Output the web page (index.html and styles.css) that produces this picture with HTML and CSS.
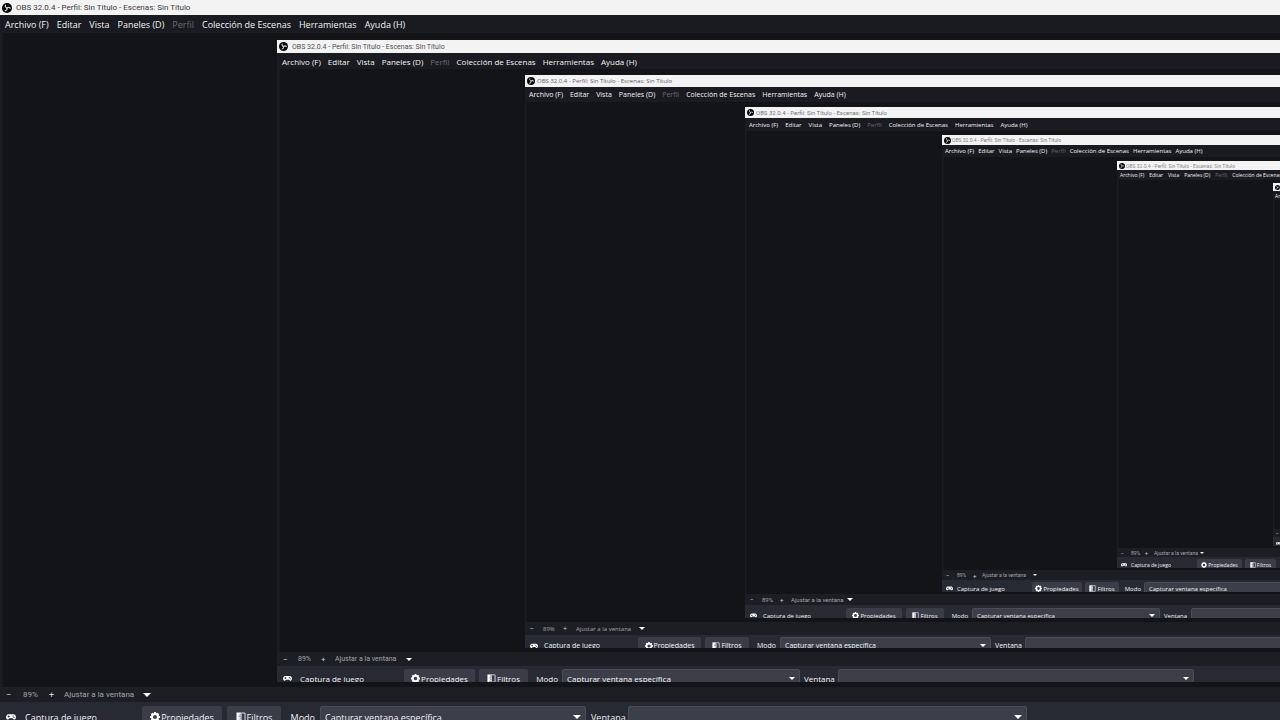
FILE: index.html
```html
<!DOCTYPE html>
<html lang="es">

<head>
    <meta charset="UTF-8">
    <meta name="viewport" content="width=device-width, initial-scale=1.0">
    <title>OBS 32.0.4 - Perfil: Sin Título - Escenas: Sin Título</title>
    <link rel="stylesheet" href="styles.css">
</head>

<body>

    <!-- Shared icons -->
    <svg class="icon-defs" aria-hidden="true">
        <symbol id="icon-obs" viewBox="0 0 20 20">
            <circle cx="10" cy="10" r="10" fill="#08090b"/>
            <g fill="none" stroke="#d4d4d8" stroke-width="2.4" stroke-linecap="round">
                <path d="M7 4.400c-1 3 .6 4.900 3 5.400"/>
                <path d="M7 4.400c-1 3 .6 4.900 3 5.400" transform="rotate(120 10 10)"/>
                <path d="M7 4.400c-1 3 .6 4.900 3 5.400" transform="rotate(240 10 10)"/>
            </g>
        </symbol>
        <symbol id="icon-gamepad" viewBox="0 0 22 14">
            <path fill="#fff" fill-rule="evenodd" d="M6 1h10a6 6 0 0 1 5.500 8c-.6 3.600-3.500 4.800-5.500 2.500L14.500 10h-7L6 11.500C4 13.800 1.100 12.600.5 9A6 6 0 0 1 6 1zM5.200 3.500v1.700H3.500v1.600h1.700v1.700h1.600V6.800h1.700V5.200H6.800V3.500zM15.500 3.500a1.300 1.300 0 1 0 .01 0zM17.500 6.500a1.300 1.300 0 1 0 .01 0z"/>
        </symbol>
        <symbol id="icon-gear" viewBox="0 0 20 20">
            <circle cx="10" cy="10" r="6" fill="none" stroke="#fff" stroke-width="4"/>
            <path stroke="#fff" stroke-width="4" d="M10 0v4M10 16v4M0 10h4M16 10h4M3 3l3 3M14 14l3 3M3 17l3-3M14 6l3-3"/>
        </symbol>
        <symbol id="icon-filter" viewBox="0 0 20 20">
            <path fill="#fff" d="M1 1h10v18H1z"/>
            <path fill="#9b9ca6" d="M7 3h4v3H7zM5 7h6v3H5zM7 11h4v3H7zM5 15h6v3H5z"/>
            <path fill="none" stroke="#d8d9de" stroke-width="2" d="M11 2h7v16h-7"/>
        </symbol>
    </svg>

    <main id="screen"></main>

    <script src="script.js"></script>

</body>

</html>
```
FILE: styles.css
```css
/* Basic reset */
* {
    box-sizing: border-box;
    margin: 0;
    padding: 0;
}

body {
    height: 100vh;
    background: #131418;
    color: #f2f2f4;
    overflow: hidden;
}

#screen {
    display: grid;
    height: 100%;
}

.icon-defs {
    position: absolute;
    width: 0;
    height: 0;
}

/* Sizes of every capture level, from the outer window to the deepest one */
.level-0 {
    --font: 9px; --small-font: 8px; --icon: 10px;
    --title-h: 15px; --menu-h: 18px; --status-h: 15px; --tools-h: 18px;
    --title-gap: 4px; --name-gap: 9px; --title-color: #3c3c40;
    --menu-gap: 8px; --edge: 5px; --gap: 5px; --button-top: 4px; --button-h: 22px;
    --indent: 274px; --pad-top: 7px; --pad-bottom: 5px;
    --status-cols: 17px 26px 15px 87px;
    --tool-cols: 131px 80px 54px 29px 266px 32px 399px;
}

.level-1 {
    --font: 8px; --small-font: 7px; --icon: 9px;
    --title-h: 13px; --menu-h: 16px; --status-h: 14px; --tools-h: 16px;
    --title-gap: 4px; --name-gap: 8px; --title-color: #505055;
    --menu-gap: 7px; --edge: 5px; --gap: 4px; --button-top: 3px; --button-h: 19px;
    --indent: 245px; --pad-top: 6px; --pad-bottom: 4px;
    --status-cols: 15px 23px 14px 77px;
    --tool-cols: 117px 71px 49px 26px 238px 30px 356px;
}

.level-2 {
    --font: 7px; --small-font: 6px; --icon: 8px;
    --title-h: 12px; --menu-h: 15px; --status-h: 13px; --tools-h: 13px;
    --title-gap: 2px; --name-gap: 6px; --title-color: #626267;
    --menu-gap: 7px; --edge: 4px; --gap: 4px; --button-top: 2px; --button-h: 17px;
    --indent: 218px; --pad-top: 5px; --pad-bottom: 4px;
    --status-cols: 13px 20px 13px 69px;
    --tool-cols: 104px 63px 44px 23px 211px 26px 317px;
}

.level-3 {
    --font: 6px; --small-font: 6px; --icon: 7px;
    --title-h: 11px; --menu-h: 13px; --status-h: 11px; --tools-h: 13px;
    --title-gap: 2px; --name-gap: 6px; --title-color: #747478;
    --menu-gap: 7px; --edge: 4px; --gap: 4px; --button-top: 3px; --button-h: 15px;
    --indent: 195px; --pad-top: 4px; --pad-bottom: 2px;
    --status-cols: 12px 18px 11px 62px;
    --tool-cols: 92px 56px 38px 20px 188px 23px 282px;
}

.level-4 {
    --font: 6px; --small-font: 5px; --icon: 7px;
    --title-h: 10px; --menu-h: 12px; --status-h: 10px; --tools-h: 12px;
    --title-gap: 1px; --name-gap: 4px; --title-color: #828286;
    --menu-gap: 4px; --edge: 3px; --gap: 3px; --button-top: 2px; --button-h: 13px;
    --indent: 173px; --pad-top: 4px; --pad-bottom: 2px;
    --status-cols: 11px 16px 9px 55px;
    --tool-cols: 83px 50px 34px 19px 167px 21px 251px;
}

.level-5 {
    --font: 5px; --small-font: 5px; --icon: 6px;
    --title-h: 9px; --menu-h: 10px; --status-h: 9px; --tools-h: 11px;
    --title-gap: 1px; --name-gap: 4px; --title-color: #8a8a8e;
    --menu-gap: 5px; --edge: 3px; --gap: 3px; --button-top: 2px; --button-h: 12px;
    --indent: 154px; --pad-top: 3px; --pad-bottom: 2px;
    --status-cols: 10px 14px 9px 50px;
    --tool-cols: 73px 45px 31px 17px 149px 19px 223px;
}

.level-6 {
    --font: 5px; --small-font: 4px; --icon: 5px;
    --title-h: 8px; --menu-h: 9px; --status-h: 8px; --tools-h: 9px;
    --title-gap: 1px; --name-gap: 4px; --title-color: #8a8a8e;
    --menu-gap: 4px; --edge: 2px; --gap: 3px; --button-top: 1px; --button-h: 11px;
    --indent: 138px; --pad-top: 3px; --pad-bottom: 3px;
    --status-cols: 9px 12px 8px 44px;
    --tool-cols: 67px 40px 28px 15px 133px 17px 199px;
}

/* Window */
.window {
    display: flex;
    flex-direction: column;
    min-width: 0;
    min-height: 0;
    overflow: hidden;
    background: #1c1d22;
    font-family: 'Open Sans', 'Noto Sans', sans-serif;
    font-size: var(--font);
    white-space: nowrap;
}

.title-bar {
    display: flex;
    flex: none;
    align-items: center;
    gap: var(--title-gap);
    height: var(--title-h);
    padding-left: 2px;
    background: #f3f3f4;
    color: var(--title-color);
}

.title-bar h1 {
    font-family: Roboto, 'Open Sans', sans-serif;
    font-size: var(--small-font);
    font-weight: 400;
}

.icon {
    flex: none;
    width: var(--icon);
    height: var(--icon);
}

.menu-bar {
    display: flex;
    flex: none;
    align-items: center;
    gap: var(--menu-gap);
    height: var(--menu-h);
    padding-left: var(--edge);
    background: #191b20;
}

.menu-bar a {
    color: #f2f2f4;
    text-decoration: none;
}

.menu-bar a.disabled {
    color: #67686e;
}

/* Preview area, holds the captured window */
.preview {
    display: grid;
    flex: 1;
    min-height: 0;
    padding: var(--pad-top) 0 var(--pad-bottom) var(--indent);
    margin-left: 2px;
    border-left: 1px solid #17181c;
    background: #131418;
}

.level-2 .preview {
    margin-left: 1px;
}

/* Zoom row under the preview */
.status-bar {
    display: grid;
    flex: none;
    grid-template-columns: var(--status-cols);
    align-items: center;
    height: var(--status-h);
    padding-left: calc(var(--edge) + 1px);
    background: #1d1e23;
    color: #a3a4aa;
    font-family: Roboto, 'Open Sans', sans-serif;
    font-size: var(--small-font);
}

.level-2 > .title-bar h1,
.level-2 > .status-bar {
    font-family: 'Open Sans', 'Noto Sans', sans-serif;
}

button,
select {
    border: none;
    background: none;
    color: inherit;
    font: inherit;
}

.status-bar button {
    color: #d0d1d5;
    font-size: var(--font);
    text-align: left;
}

select {
    appearance: none;
    flex: 1;
    min-width: 0;
    height: 100%;
}

.combo {
    display: flex;
    align-items: center;
}

.combo::after {
    content: "";
    border: 4px solid transparent;
    border-top-color: #fff;
    border-bottom: none;
}

.level-1 .combo::after {
    border-width: 3px;
    border-bottom: none;
}

.level-4 .combo::after {
    border-width: 2px;
    border-bottom: none;
}

/* Source toolbar, cut by the bottom edge of the window */
.source-bar {
    display: grid;
    flex: none;
    grid-template-columns: var(--tool-cols);
    grid-auto-rows: var(--button-h);
    align-items: stretch;
    gap: var(--gap);
    height: var(--tools-h);
    padding: var(--button-top) 0 0 calc(var(--edge) + 1px);
    overflow: hidden;
    background: #272933;
}

.source-name {
    display: flex;
    align-items: center;
    gap: var(--name-gap);
}

.source-bar button {
    display: flex;
    align-items: center;
    justify-content: center;
    gap: 1px;
    border-radius: 2px;
    background: #3a3c48;
}

.source-bar label {
    align-self: center;
    text-align: right;
}

.source-bar .combo {
    padding: 0 4px;
    border: 1px solid #4a4c58;
    border-radius: 2px;
    background: #3c3e4a;
}
```
FILE: script.js
```js
const LEVELS = 7;

function icon(name) {
    return `<svg class="icon" aria-hidden="true"><use href="#icon-${name}"/></svg>`;
}

// Each window shows a capture of itself inside its preview
function renderWindow(level) {
    if (level === LEVELS) {
        return '';
    }

    return `
        <section class="window level-${level}">
            <header class="title-bar">
                ${icon('obs')}
                <h1>OBS 32.0.4 - Perfil: Sin Título - Escenas: Sin Título</h1>
            </header>
            <nav class="menu-bar">
                <a href="#">Archivo (F)</a>
                <a href="#">Editar</a>
                <a href="#">Vista</a>
                <a href="#">Paneles (D)</a>
                <a href="#" class="disabled">Perfil</a>
                <a href="#">Colección de Escenas</a>
                <a href="#">Herramientas</a>
                <a href="#">Ayuda (H)</a>
            </nav>
            <div class="preview">${renderWindow(level + 1)}</div>
            <div class="status-bar">
                <button type="button" aria-label="Reducir">−</button>
                <span>89%</span>
                <button type="button" aria-label="Ampliar">+</button>
                <div class="combo">
                    <select aria-label="Escala"><option>Ajustar a la ventana</option></select>
                </div>
            </div>
            <div class="source-bar">
                <div class="source-name">${icon('gamepad')}<span>Captura de juego</span></div>
                <button type="button">${icon('gear')}Propiedades</button>
                <button type="button">${icon('filter')}Filtros</button>
                <label for="mode-${level}">Modo</label>
                <div class="combo">
                    <select id="mode-${level}"><option>Capturar ventana específica</option></select>
                </div>
                <label for="window-${level}">Ventana</label>
                <div class="combo">
                    <select id="window-${level}"><option></option></select>
                </div>
            </div>
        </section>`;
}

document.getElementById('screen').innerHTML = renderWindow(0);
```
